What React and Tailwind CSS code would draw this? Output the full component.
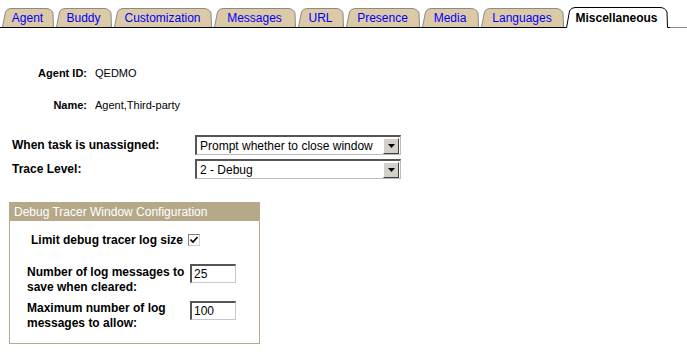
const tabs = [
  { label: "Agent", w: 54 },
  { label: "Buddy", w: 58 },
  { label: "Customization", w: 100 },
  { label: "Messages", w: 84 },
  { label: "URL", w: 48 },
  { label: "Presence", w: 76 },
  { label: "Media", w: 59 },
  { label: "Languages", w: 85 },
];

function TabShape({ w, h, fill, stroke }) {
  return (
    <svg className="absolute inset-0" width={w} height={h} viewBox={`0 0 ${w} ${h}`}>
      <path
        d={`M0.5,${h} L3.5,4 Q5,0.5 9,0.5 L${w - 10},0.5 Q${w - 5},0.5 ${w - 3},5 L${w - 2.5},${h}`}
        fill={fill}
        stroke={stroke}
        strokeWidth="1"
      />
    </svg>
  );
}

function Tab({ label, w }) {
  return (
    <div className="relative h-[19px] flex items-center justify-center" style={{ width: w }}>
      <TabShape w={w} h={19} fill="#dbcaa5" stroke="#8a8a8a" />
      <span className="relative text-[12px] text-[#0000ff] pr-[3px] leading-none">{label}</span>
    </div>
  );
}

function Select({ value, w }) {
  return (
    <div
      className="h-[20px] flex items-center border-t-2 border-l-2 border-t-[#555] border-l-[#555] border-b border-r border-b-[#bbb] border-r-[#bbb] bg-white"
      style={{ width: w }}
    >
      <span className="flex-1 pl-[3px] text-[12px] text-black whitespace-nowrap">{value}</span>
      <div className="w-[16px] h-[16px] mr-[1px] bg-[#d4d0c8] border border-t-white border-l-white border-b-[#404040] border-r-[#404040] flex items-center justify-center">
        <svg width="7" height="4" viewBox="0 0 7 4">
          <path d="M0,0 L7,0 L3.5,4 Z" fill="#000" />
        </svg>
      </div>
    </div>
  );
}

function TextInput({ value }) {
  return (
    <div className="w-[46px] h-[19px] bg-white border-t-2 border-l-2 border-t-[#555] border-l-[#555] border-b border-r border-b-[#c8c8c8] border-r-[#c8c8c8] flex items-center pl-[2px] text-[12px] text-black">
      {value}
    </div>
  );
}

export default function App() {
  return (
    <div className="w-[687px] h-[352px] bg-white overflow-hidden" style={{ fontFamily: '"Liberation Sans", Arial, sans-serif' }}>
      {/* Tabs */}
      <div className="flex items-end mt-[7px] h-[21px]">
        <div className="flex items-end h-full pl-[2px] border-b border-black">
          {tabs.map((t) => (
            <Tab key={t.label} {...t} />
          ))}
        </div>
        <div className="relative w-[104px] h-[21px] flex items-center justify-center">
          <svg className="absolute inset-0" width="104" height="21" viewBox="0 0 104 21">
            <path d="M0.5,21 L3.5,4 Q5,0.5 9,0.5 L94,0.5 Q99,0.5 101,5 L101.5,20.5 L104,20.5" fill="#fff" stroke="#000" strokeWidth="1" />
          </svg>
          <span className="relative text-[12px] font-bold text-black pr-[3px] pt-[1px] leading-none">Miscellaneous</span>
        </div>
        <div className="flex-1 h-full border-b border-[#888]" />
      </div>

      {/* Agent info */}
      <div className="mt-[38px] grid grid-cols-[87px_1fr] gap-x-[8px] gap-y-[18px] text-[11px] text-black">
        <div className="font-bold text-right leading-[14px]">Agent ID:</div>
        <div className="leading-[14px]">QEDMO</div>
        <div className="font-bold text-right leading-[14px]">Name:</div>
        <div className="leading-[14px]">Agent,Third-party</div>
      </div>

      {/* Options */}
      <div className="mt-[23px] pl-[12px] flex flex-col gap-[4px]">
        <div className="flex items-center">
          <div className="w-[183px] text-[12px] font-bold text-black">When task is unassigned:</div>
          <Select value="Prompt whether to close window" w={206} />
        </div>
        <div className="flex items-center">
          <div className="w-[183px] text-[12px] font-bold text-black">Trace Level:</div>
          <Select value="2 - Debug" w={206} />
        </div>
      </div>

      {/* Debug tracer group */}
      <div className="mt-[23px] ml-[9px] w-[251px] h-[142px] border border-[#b5a98a]">
        <div className="h-[18px] bg-[#b5a98a] text-white text-[12px] leading-[18px] pl-[4px]">
          Debug Tracer Window Configuration
        </div>
        <div className="mt-[10px] pl-[21px] flex items-center">
          <span className="w-[157px] text-[12px] font-bold text-black">Limit debug tracer log size</span>
          <div className="w-[12px] h-[12px] border border-t-[#808080] border-l-[#808080] border-b-[#d4d0c8] border-r-[#d4d0c8] bg-white flex items-center justify-center">
            <svg width="8" height="8" viewBox="0 0 8 8">
              <path d="M0.5,3.5 L3,6 L7.5,1" fill="none" stroke="#000" strokeWidth="1.6" />
            </svg>
          </div>
        </div>
        <div className="mt-[15px] pl-[17px] flex items-start">
          <div className="w-[163px] text-[12px] font-bold text-black leading-[15px] pt-[1px]">
            Number of log messages to<br />save when cleared:
          </div>
          <TextInput value="25" />
        </div>
        <div className="mt-[6px] pl-[17px] flex items-start">
          <div className="w-[163px] text-[12px] font-bold text-black leading-[15px] pt-[0px]">
            Maximum number of log<br />messages to allow:
          </div>
          <TextInput value="100" />
        </div>
      </div>
    </div>
  );
}
